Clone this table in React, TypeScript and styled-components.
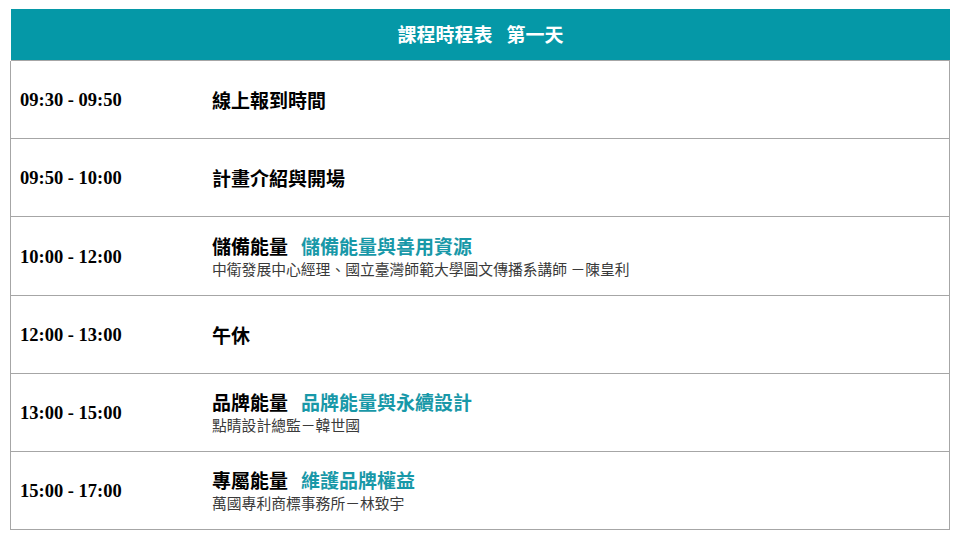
import React from "react";
import styled, { createGlobalStyle } from "styled-components";

const GlobalStyle = createGlobalStyle`
  html, body {
    margin: 0;
    padding: 0;
    background: #ffffff;
  }
  body {
    font-family: "Noto Sans CJK TC", "Noto Sans", sans-serif;
  }
`;

const Page = styled.div`
  width: 960px;
  height: 540px;
  padding: 9px 10px 0 10px;
  box-sizing: border-box;
`;

const Table = styled.div`
  display: flex;
  flex-direction: column;
`;

const Header = styled.div`
  height: 48px;
  padding-bottom: 3px;
  margin-left: 1px;
  background: #0598a7;
  color: #ffffff;
  display: flex;
  align-items: center;
  justify-content: center;
  gap: 14px;
  font-size: 19px;
  font-weight: 700;
  border-bottom: 1px solid #a6a6a6;
`;

const Row = styled.div<{ $tall?: boolean }>`
  display: grid;
  grid-template-columns: 201px 1fr;
  align-items: center;
  height: ${(p) => (p.$tall ? "78px" : "77px")};
  border-left: 1px solid #a6a6a6;
  border-right: 1px solid #a6a6a6;
  border-bottom: 1px solid #a6a6a6;
`;

const Time = styled.div`
  padding-left: 9px;
  padding-top: 2px;
  font-family: "Liberation Serif", "Times New Roman", serif;
  font-weight: 700;
  font-size: 18.5px;
  color: #000000;
`;

const Body = styled.div`
  display: flex;
  flex-direction: column;
  gap: 1px;
`;

const Title = styled.div`
  display: flex;
  gap: 13px;
  font-size: 19px;
  font-weight: 700;
  line-height: 24px;
  color: #000000;
`;

const Topic = styled.span`
  color: #1898a8;
`;

const Speaker = styled.div`
  font-size: 14.8px;
  line-height: 20px;
  color: #3a3a3a;
`;

type Session = {
  time: string;
  title: string;
  topic?: string;
  speaker?: string;
};

const sessions: Session[] = [
  { time: "09:30 - 09:50", title: "線上報到時間" },
  { time: "09:50 - 10:00", title: "計畫介紹與開場" },
  {
    time: "10:00 - 12:00",
    title: "儲備能量",
    topic: "儲備能量與善用資源",
    speaker: "中衛發展中心經理、國立臺灣師範大學圖文傳播系講師 －陳皇利",
  },
  { time: "12:00 - 13:00", title: "午休" },
  {
    time: "13:00 - 15:00",
    title: "品牌能量",
    topic: "品牌能量與永續設計",
    speaker: "點睛設計總監－韓世國",
  },
  {
    time: "15:00 - 17:00",
    title: "專屬能量",
    topic: "維護品牌權益",
    speaker: "萬國專利商標事務所－林致宇",
  },
];

export default function App() {
  return (
    <Page>
      <GlobalStyle />
      <Table>
        <Header>
          <span>課程時程表</span>
          <span>第一天</span>
        </Header>
        {sessions.map((s, i) => (
          <Row key={s.time} $tall={i === 2}>
            <Time>{s.time}</Time>
            <Body>
              <Title>
                <span>{s.title}</span>
                {s.topic && <Topic>{s.topic}</Topic>}
              </Title>
              {s.speaker && <Speaker>{s.speaker}</Speaker>}
            </Body>
          </Row>
        ))}
      </Table>
    </Page>
  );
}
